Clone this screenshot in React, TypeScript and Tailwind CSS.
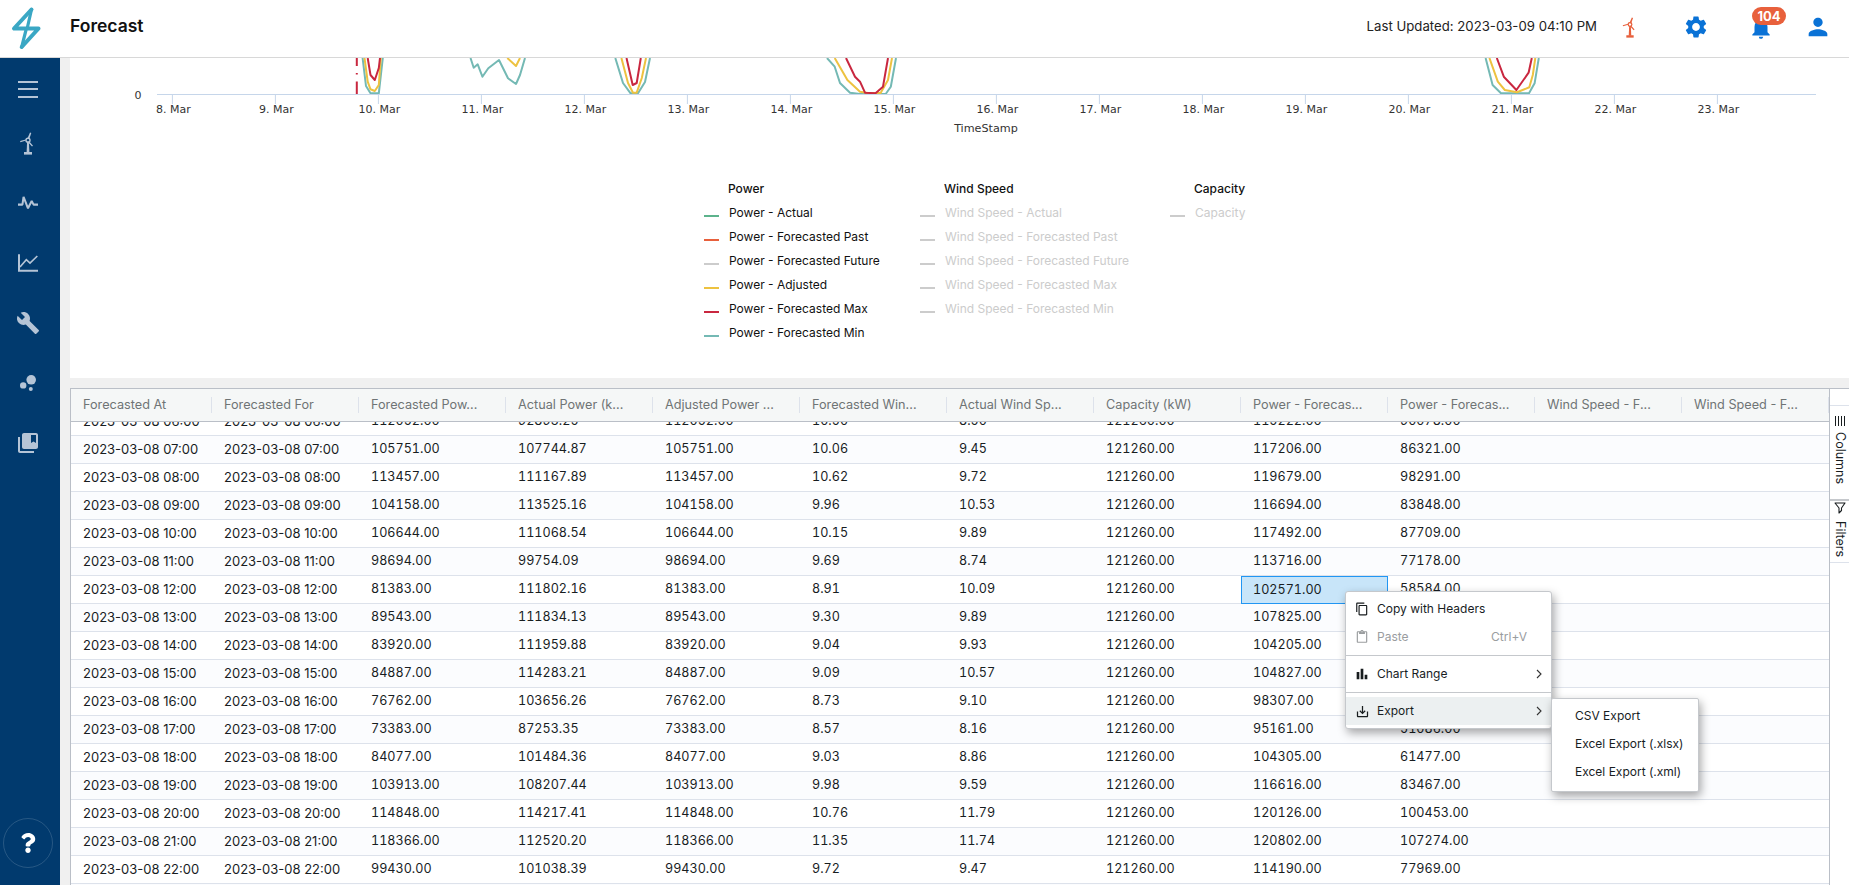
import React from "react";
import { MdSettings, MdNotifications, MdPerson, MdBuild, MdBubbleChart, MdCollectionsBookmark, MdContentCopy, MdOutlineContentPaste, MdSaveAlt, MdBarChart } from "react-icons/md";
import { FaQuestion } from "react-icons/fa";

const TEAL = "#74b9b4";
const YELLOW = "#edc240";
const RED = "#c9273f";

const curves: [string, string][] = [
  [TEAL, "362.6,58 366,86 370.5,93.3 378.8,93.3 382.8,58"],
  [YELLOW, "364.5,58 367.7,81.7 370.5,89.3 374.8,91 378.8,85 380.8,58"],
  [RED, "367.7,58 370.5,75 374.8,80 378.8,68 380,58"],
  [TEAL, "470.5,58 473.7,67.7 477.7,64.3 482.4,76.7 488.3,68.3 499,60 508,78.3 516,84 520,75 525,58"],
  [YELLOW, "507.3,58 516,66 520,58"],
  [TEAL, "615.3,58 623,83 630.6,93.3 638,93.3 645,82 650,58"],
  [YELLOW, "621.4,58 628,83 633,92.7 636.7,92.7 641.8,78 646,58"],
  [RED, "626.5,58 632.7,85 636.7,83 640.8,58"],
  [TEAL, "827,58 834.7,66.7 840,83 850,92.7 860,94 885.7,94 890.8,86.7 896,58"],
  [YELLOW, "834.7,58 847.4,80 860,91.7 868,93 880.6,93 888,80 892,58"],
  [RED, "846,58 855,76.7 860,81.7 865,92.7 875.5,93.3 883,86.7 888,58"],
  [TEAL, "1485.6,58 1492.6,85 1501,93.3 1529,93.3 1534.6,83.3 1538.8,58"],
  [YELLOW, "1489.4,58 1497.8,81.7 1504.8,90 1517,92.3 1529.3,87.3 1532.8,75 1535.3,58"],
  [RED, "1496.8,58 1503.8,76.7 1516.4,90 1528.6,72.7 1531.8,58"],
];

const days = [8, 9, 10, 11, 12, 13, 14, 15, 16, 17, 18, 19, 20, 21, 22, 23];

const headers = [
  "Forecasted At", "Forecasted For", "Forecasted Pow...", "Actual Power (k...", "Adjusted Power ...", "Forecasted Win...",
  "Actual Wind Sp...", "Capacity (kW)", "Power - Forecas...", "Power - Forecas...", "Wind Speed - F...", "Wind Speed - F...",
];

const rows: string[][] = [
  ["06:00", "112052.00", "92893.25", "112052.00", "10.50", "8.50", "115222.00", "90078.00"],
  ["07:00", "105751.00", "107744.87", "105751.00", "10.06", "9.45", "117206.00", "86321.00"],
  ["08:00", "113457.00", "111167.89", "113457.00", "10.62", "9.72", "119679.00", "98291.00"],
  ["09:00", "104158.00", "113525.16", "104158.00", "9.96", "10.53", "116694.00", "83848.00"],
  ["10:00", "106644.00", "111068.54", "106644.00", "10.15", "9.89", "117492.00", "87709.00"],
  ["11:00", "98694.00", "99754.09", "98694.00", "9.69", "8.74", "113716.00", "77178.00"],
  ["12:00", "81383.00", "111802.16", "81383.00", "8.91", "10.09", "102571.00", "58584.00"],
  ["13:00", "89543.00", "111834.13", "89543.00", "9.30", "9.89", "107825.00", "66690.00"],
  ["14:00", "83920.00", "111959.88", "83920.00", "9.04", "9.93", "104205.00", "60780.00"],
  ["15:00", "84887.00", "114283.21", "84887.00", "9.09", "10.57", "104827.00", "62330.00"],
  ["16:00", "76762.00", "103656.26", "76762.00", "8.73", "9.10", "98307.00", "52860.00"],
  ["17:00", "73383.00", "87253.35", "73383.00", "8.57", "8.16", "95161.00", "51086.00"],
  ["18:00", "84077.00", "101484.36", "84077.00", "9.03", "8.86", "104305.00", "61477.00"],
  ["19:00", "103913.00", "108207.44", "103913.00", "9.98", "9.59", "116616.00", "83467.00"],
  ["20:00", "114848.00", "114217.41", "114848.00", "10.76", "11.79", "120126.00", "100453.00"],
  ["21:00", "118366.00", "112520.20", "118366.00", "11.35", "11.74", "120802.00", "107274.00"],
  ["22:00", "99430.00", "101038.39", "99430.00", "9.72", "9.47", "114190.00", "77969.00"],
  ["23:00", "", "", "", "", "", "", ""],
];

const powerLegend: [string, string][] = [
  ["Power - Actual", "bg-[#5cb38c]"],
  ["Power - Forecasted Past", "bg-[#e8603c]"],
  ["Power - Forecasted Future", "bg-[#cccccc]"],
  ["Power - Adjusted", "bg-[#edc240]"],
  ["Power - Forecasted Max", "bg-[#c9273f]"],
  ["Power - Forecasted Min", "bg-[#74b9b4]"],
];
const windLegend = ["Wind Speed - Actual", "Wind Speed - Forecasted Past", "Wind Speed - Forecasted Future", "Wind Speed - Forecasted Max", "Wind Speed - Forecasted Min"];

function Turbine({ className }: { className: string }) {
  return (
    <svg viewBox="0 0 24 24" className={className} fill="currentColor">
      <path d="M11.1 10.5h1.8L13.4 21.5h-2.8z" />
      <rect x="8" y="21" width="8" height="2.6" />
      <path d="M11.4 7.6 14 1.6l1.3.5-2 6zM10 9.6 4.4 11.2l-.3-1.2 5.7-1.6zM13.4 10.6l3.6 4.2-1 .8-3.8-4.2z" />
      <circle cx="12" cy="9.2" r="2" fill="none" stroke="currentColor" strokeWidth="1.4" />
    </svg>
  );
}

function Logo() {
  return (
    <svg viewBox="0 0 50 57" className="w-[50px] h-[57px]" fill="none" stroke="#3aa7c4" strokeLinecap="round" strokeLinejoin="round">
      <path d="M31.5 9.5 14 28.5 38.5 28.5 21.7 47" strokeWidth="4" />
      <path d="M31.5 9.5 27.5 27M21.7 47 26 30" strokeWidth="3.2" />
    </svg>
  );
}

function Legend({ label, swatch, muted }: { label: string; swatch: string; muted?: boolean }) {
  return (
    <div className={`h-6 flex items-center gap-[10px] ${muted ? "text-[#cccccc]" : "text-[#111111]"}`}>
      <span className={`w-[15px] h-[2px] mt-[6px] ${swatch}`} />
      <span>{label}</span>
    </div>
  );
}

function MenuItem({ icon, label, hint, arrow, active, disabled }: { icon?: React.ReactNode; label: string; hint?: string; arrow?: boolean; active?: boolean; disabled?: boolean }) {
  return (
    <div className={`h-7 flex items-center ${active ? "bg-[#ecf0f1]" : ""} ${disabled ? "text-[#9a9d9f]" : "text-[#181d1f]"}`}>
      <span className="w-[31px] pl-[9px] flex items-center">{icon}</span>
      <span className="flex-1">{label}</span>
      {hint && <span className="pr-[24px]">{hint}</span>}
      {arrow && (
        <svg viewBox="0 0 8 10" className="w-2 h-[10px] mr-2" fill="none" stroke="#333333" strokeWidth="1.1">
          <path d="M2 1 6 5 2 9" />
        </svg>
      )}
    </div>
  );
}

const cellW = (i: number) => (i === 0 ? "w-[141px]" : "w-[147px]");

export default function App() {
  return (
    <div className="relative w-full h-screen overflow-hidden flex flex-col bg-white [font-family:Inter,sans-serif] text-[#181d1f]">
      <header className="h-[58px] shrink-0 flex items-center bg-white border-b border-[#d8d8d8] pb-px">
        <div className="w-[70px] flex"><Logo /></div>
        <h1 className="text-[17.5px] font-semibold text-[#111111] mb-[3px]">Forecast</h1>
        <div className="ml-auto flex items-center mb-[3px]">
          <span className="text-[13.2px] text-[#222222]">Last Updated: 2023-03-09 04:10 PM</span>
          <Turbine className="w-[22px] h-[22px] ml-[22px] text-[#e8603c]" />
          <MdSettings className="w-[26px] h-[26px] ml-[42px] text-[#0a72d6]" />
          <div className="relative ml-[39px] w-[26px] h-[26px]">
            <MdNotifications className="w-[26px] h-[26px] text-[#0a72d6] mt-px" />
            <span className="absolute -top-[7px] -right-[12px] w-[34px] h-[18px] rounded-full bg-[#e8603c] text-white text-[13px] font-bold leading-[18px] text-center">104</span>
          </div>
          <MdPerson className="w-[28px] h-[28px] ml-[30px] mr-[17px] text-[#0a72d6]" />
        </div>
      </header>

      <div className="flex-1 flex min-h-0">
        <aside className="w-[60px] shrink-0 bg-[#013a6e] flex flex-col items-center pr-1 text-[#b5c4d6]">
          <div className="h-[55px] pt-[7px] flex flex-col justify-center">
            <div className="w-5 flex flex-col gap-[5.5px]">
              <span className="h-[2px] bg-[#b5c4d6]" />
              <span className="h-[2px] bg-[#b5c4d6]" />
              <span className="h-[2px] bg-[#b5c4d6]" />
            </div>
          </div>
          <div className="h-[60px] flex items-center"><Turbine className="w-6 h-6" /></div>
          <div className="h-[60px] flex items-center">
            <svg viewBox="0 0 54 40" className="w-[20px] h-[15px]" fill="none" stroke="currentColor" strokeWidth="5.5" strokeLinejoin="bevel">
              <path d="M0 23H12L15 2 27 33 37 13 42 23H54" />
            </svg>
          </div>
          <div className="h-[60px] flex items-center">
            <svg viewBox="0 0 60 52" className="w-5 h-[18px]" fill="none" stroke="currentColor" strokeWidth="6">
              <path d="M3 0V49H60" />
              <path d="M6 38 25 16 36 26 58 5" strokeWidth="5" />
            </svg>
          </div>
          <div className="h-[60px] flex items-center"><MdBuild className="w-[24px] h-[24px]" /></div>
          <div className="h-[60px] flex items-center"><MdBubbleChart className="w-[24px] h-[24px]" /></div>
          <div className="h-[60px] flex items-center"><MdCollectionsBookmark className="w-[24px] h-[24px]" /></div>
          <div className="mt-auto mb-[17px] w-[50px] h-[50px] rounded-full border border-white/15 flex items-center justify-center">
            <FaQuestion className="w-[20px] h-[20px] text-white" />
          </div>
        </aside>

        <main className="flex-1 min-w-0 flex flex-col bg-[#f0f0f0] pl-[10px]">
          <section className="h-[320px] shrink-0 bg-white mb-[10px]">
            <svg width="1779" height="80" viewBox="70 58 1779 80" className="block [font-family:'DejaVu_Sans',sans-serif]">
              {curves.map(([c, p], i) => (
                <polyline key={i} points={p} fill="none" stroke={c} strokeWidth="2" strokeLinejoin="round" />
              ))}
              <line x1="356.8" y1="58" x2="356.8" y2="94" stroke="#c9273f" strokeWidth="2" strokeDasharray="8 7 1.5 7 13" />
              <line x1="157" y1="94.5" x2="1816" y2="94.5" stroke="#c6d6ea" strokeWidth="1" />
              {days.map((d, i) => {
                const x = 172.4 + 103 * i;
                return (
                  <g key={d}>
                    <line x1={x} y1="94" x2={x} y2="104" stroke="#c6d6ea" strokeWidth="1" />
                    <text x={x + 1} y="113" textAnchor="middle" fill="#333333" className="text-[11px]">{d}. Mar</text>
                  </g>
                );
              })}
              <text x="138" y="99" textAnchor="middle" fill="#333333" className="text-[11px]">0</text>
              <text x="986" y="131.5" textAnchor="middle" fill="#333333" className="text-[11.2px]">TimeStamp</text>
            </svg>

            <div className="grid grid-cols-[216px_250px_auto] w-fit ml-[634px] pt-[39px] text-[12px]">
              <div>
                <div className="h-6 flex items-center pl-[24px] font-medium text-[#111111]">Power</div>
                {powerLegend.map(([l, s]) => <Legend key={l} label={l} swatch={s} />)}
              </div>
              <div>
                <div className="h-6 flex items-center pl-[24px] font-medium text-[#111111]">Wind Speed</div>
                {windLegend.map((l) => <Legend key={l} label={l} swatch="bg-[#cccccc]" muted />)}
              </div>
              <div>
                <div className="h-6 flex items-center pl-[24px] font-medium text-[#111111]">Capacity</div>
                <Legend label="Capacity" swatch="bg-[#cccccc]" muted />
              </div>
            </div>
          </section>

          <section className="flex-1 min-h-0 flex border-l border-t border-[#babfc7] bg-white text-[13px]">
            <div className="flex-1 min-w-0 flex flex-col">
              <div className="h-[33px] shrink-0 flex bg-[#f5f7f7] border-b border-[#babfc7] text-[#6f7475] text-[12.7px]">
                {headers.map((h, i) => (
                  <div key={i} className={`${cellW(i)} shrink-0 flex items-center pl-3`}>
                    <span className="flex-1 whitespace-nowrap overflow-hidden">{h}</span>
                    <span className="w-px h-4 bg-[#dde2eb]" />
                  </div>
                ))}
              </div>
              <div className="flex-1 min-h-0 overflow-hidden">
                <div className="-mt-[14px]">
                  {rows.map((r, ri) => {
                    const [hour, fp, ap, adj, fw, aw, fmax, fmin] = r;
                    const vals = [`2023-03-08 ${hour}`, `2023-03-08 ${hour}`, fp, ap, adj, fw, aw, fp ? "121260.00" : "", fmax, fmin, "", ""];
                    return (
                      <div key={hour} className={`h-[28px] flex border-b border-[#dde2eb] ${ri % 2 === 1 ? "bg-[#fbfcfe]" : "bg-white"}`}>
                        {vals.map((v, i) => (
                          <div key={i} className={`${cellW(i)} shrink-0 flex items-center pl-3 text-[#181d1f] ${i >= 2 ? "tabular-nums text-[12.6px]" : ""} ${hour === "12:00" && i === 8 ? "bg-[#c8e5f9] border border-[#2196f3] pl-[11px] h-[28px]" : ""}`}>{v}</div>
                        ))}
                      </div>
                    );
                  })}
                </div>
              </div>
            </div>
            <div className="w-5 shrink-0 border-l border-[#babfc7] bg-white text-[#181d1f] text-[12.5px]">
              <div className="h-[17px] border-b border-[#dde2eb]" />
              <div className="h-[95px] flex flex-col items-center pt-[9px] gap-[5px] border-b-2 border-[#c5c8cc]">
                <svg viewBox="0 0 12 12" className="w-3 h-3" fill="none" stroke="#181d1f" strokeWidth="1"><path d="M1.5 1V11M4.5 1V11M7.5 1V11M10.5 1V11" /></svg>
                <span className="[writing-mode:vertical-rl]">Columns</span>
              </div>
              <div className="h-[62px] flex flex-col items-center pt-[1px] gap-[7px] border-b border-[#dde2eb]">
                <svg viewBox="0 0 12 12" className="w-3 h-3" fill="none" stroke="#181d1f" strokeWidth="1.1" strokeLinejoin="round"><path d="M11 1H1L5 6V11L7.5 8.5V6Z" /></svg>
                <span className="[writing-mode:vertical-rl]">Filters</span>
              </div>
            </div>
          </section>
        </main>
      </div>

      <div className="absolute left-[1345px] top-[591px] w-[207px] pt-[3px] pb-[3px] bg-white border border-[#c5c8cc] rounded-[3px] shadow-[2px_4px_10px_rgba(0,0,0,0.35)] text-[12px]">
        <MenuItem icon={<MdContentCopy className="w-[14px] h-[14px]" />} label="Copy with Headers" />
        <MenuItem icon={<MdOutlineContentPaste className="w-[14px] h-[14px]" />} label="Paste" hint="Ctrl+V" disabled />
        <div className="h-[9px] flex items-center"><span className="w-full h-px bg-[#c5c8cc]" /></div>
        <MenuItem icon={<MdBarChart className="w-[16px] h-[16px] -ml-px" />} label="Chart Range" arrow />
        <div className="h-[9px] flex items-center"><span className="w-full h-px bg-[#c5c8cc]" /></div>
        <MenuItem icon={<MdSaveAlt className="w-[15px] h-[15px]" />} label="Export" arrow active />
      </div>
      <div className="absolute left-[1551px] top-[698px] w-[148px] pt-[3px] pb-[5px] bg-white border border-[#c5c8cc] rounded-[2px] shadow-[2px_4px_10px_rgba(0,0,0,0.35)] text-[12px] text-[#181d1f]">
        {["CSV Export", "Excel Export (.xlsx)", "Excel Export (.xml)"].map((t) => (
          <div key={t} className="h-7 flex items-center pl-[23px]">{t}</div>
        ))}
      </div>
    </div>
  );
}
